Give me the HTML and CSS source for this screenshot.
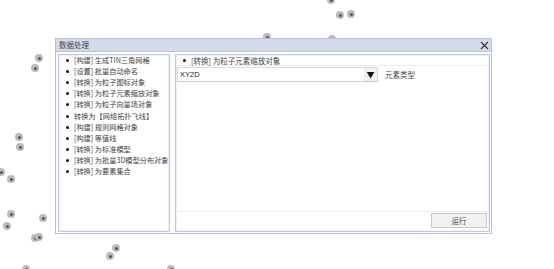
FILE: index.html
```html
<!DOCTYPE html>
<html>
<head>
<meta charset="utf-8">
<link rel="stylesheet" href="styles.css">
</head>
<body>
<div class="map">
  <span class="dot d1"></span><span class="dot d2"></span><span class="dot d3"></span><span class="dot d4"></span>
  <span class="dot d5"></span><span class="dot d6"></span><span class="dot d7"></span><span class="dot d8"></span>
  <span class="dot d9"></span><span class="dot d10"></span><span class="dot d11"></span><span class="dot d12"></span>
  <span class="dot d13"></span><span class="dot d14"></span><span class="dot d15"></span><span class="dot d16"></span>
  <span class="dot d17"></span><span class="dot d18"></span><span class="dot d19"></span><span class="dot d20"></span>

  <div class="dialog">
    <div class="titlebar">
      <span class="title">数据处理</span>
      <svg class="close" width="9" height="9" viewBox="0 0 9 9"><path d="M1 1L8 8M8 1L1 8" stroke="#333" stroke-width="1.1" fill="none"/></svg>
    </div>
    <div class="body">
      <ul class="list">
        <li>[构建] 生成TIN三角网格</li>
        <li>[设置] 批量自动命名</li>
        <li>[转换] 为粒子图标对象</li>
        <li>[转换] 为粒子元素缩放对象</li>
        <li>[转换] 为粒子向量场对象</li>
        <li>转换为【网络拓扑飞线】</li>
        <li>[构建] 规则网格对象</li>
        <li>[构建] 等值线</li>
        <li>[转换] 为标准模型</li>
        <li>[转换] 为批量3D模型分布对象</li>
        <li>[转换] 为要素集合</li>
      </ul>
      <div class="panel">
        <div class="header"><span class="bullet"></span>[转换] 为粒子元素缩放对象</div>
        <div class="row">
          <div class="select"><span class="value">XY2D</span><span class="arrow">▼</span></div>
          <span class="label">元素类型</span>
        </div>
        <div class="spacer"></div>
        <div class="footer"><button class="run">运行</button></div>
      </div>
    </div>
  </div>
</div>
</body>
</html>
```
FILE: styles.css
```css
* { box-sizing: border-box; }
html, body { margin: 0; padding: 0; background: #fff; }
body {
  width: 554px; height: 269px; overflow: hidden;
  font-family: "Noto Sans CJK SC", "Noto Sans", sans-serif;
  font-size: 7.5px; color: #444;
}
.map { position: relative; width: 554px; height: 269px; }

.dot {
  position: absolute; width: 8px; height: 8px; margin: -4px 0 0 -4px;
  border-radius: 50%; background: #bbbbbb;
}
.dot::after {
  content: ""; position: absolute; left: 2.5px; top: 2.5px; width: 3px; height: 3px;
  border-radius: 50%; background: #555;
}
.d1 { left: 331px; top: 0px; }
.d2 { left: 340px; top: 15px; }
.d3 { left: 351px; top: 14px; }
.d4 { left: 267px; top: 37px; }
.d5 { left: 332px; top: 39px; }
.d6 { left: 39px; top: 58px; }
.d7 { left: 35px; top: 68px; }
.d8 { left: 19px; top: 137px; }
.d9 { left: 20px; top: 147px; }
.d10 { left: 1px; top: 172px; }
.d11 { left: 11px; top: 179px; }
.d12 { left: 11px; top: 214px; }
.d13 { left: 43px; top: 218px; }
.d14 { left: 7px; top: 226px; }
.d15 { left: 35px; top: 238px; }
.d16 { left: 39px; top: 237px; }
.d17 { left: 116px; top: 248px; }
.d18 { left: 110px; top: 256px; }
.d19 { left: 26px; top: 269px; }
.d20 { left: 171px; top: 269px; }

.dialog {
  position: absolute; left: 55px; top: 38px; width: 437px; height: 196px;
  background: #fff; border: 1px solid #b7bfdb;
  display: flex; flex-direction: column;
}
.titlebar {
  height: 13px; flex: none; background: #d4d9eb; border-bottom: 1px solid #b7bfdb;
  display: flex; align-items: center; justify-content: space-between;
  padding: 0 2px 0 3px;
}
.title { font-size: 7.5px; line-height: 12px; color: #444; }
.close { display: block; }

.body {
  flex: 1; display: flex; gap: 5px; padding: 2px 1px 1px 2px; min-height: 0;
}
.list {
  width: 112px; flex: none; margin: 0; padding: 0; list-style: none; overflow: hidden;
  border: 1px solid #c3cae0; box-shadow: inset 0 0 0 1px #eef0f7;
  font-size: 7.2px;
}
.list li {
  display: flex; align-items: center; height: 11.1px; white-space: nowrap; line-height: 11px;
}
.list li::before, .bullet {
  content: ""; display: inline-block; flex: none; width: 3px; height: 3px; border-radius: 50%;
  background: #111; margin: 0 5px 0 7px;
}
.panel {
  flex: 1; display: flex; flex-direction: column;
  border: 1px solid #c3cae0; box-shadow: inset 0 0 0 1px #eef0f7;
}
.header {
  height: 11px; flex: none; display: flex; align-items: center; white-space: nowrap;
  border-bottom: 1px solid #ececec; line-height: 11px;
}
.header .bullet { margin: 0 5px 0 7px; }
.row { display: flex; align-items: center; margin: 1px 0 0 1px; gap: 7px; }
.select {
  width: 201px; height: 15px; display: flex; align-items: center; justify-content: space-between;
  border: 1px solid #dcdcdc; border-bottom-color: #c9c9c9; background: #fff;
}
.value { padding-left: 2px; font-family: "Liberation Sans", Arial, sans-serif; font-size: 7.5px; color: #222; }
.arrow {
  width: 13px; height: 13px; background: #f0f0f0; font-size: 8px; line-height: 13px;
  text-align: center; color: #111;
}
.label { font-size: 7.5px; color: #444; }
.spacer { flex: 1; }
.footer {
  height: 20px; flex: none; border-top: 1px solid #ececec;
  display: flex; justify-content: flex-end; align-items: flex-start; padding: 1px 2px 0 0;
}
.run {
  width: 56px; height: 15px; padding: 0; margin: 0;
  border: 1px solid #c8c8c8; background: #f1f1f1; border-radius: 0;
  font-family: "Noto Sans CJK SC", sans-serif; font-size: 7.5px; color: #444; line-height: 13px;
}
```
